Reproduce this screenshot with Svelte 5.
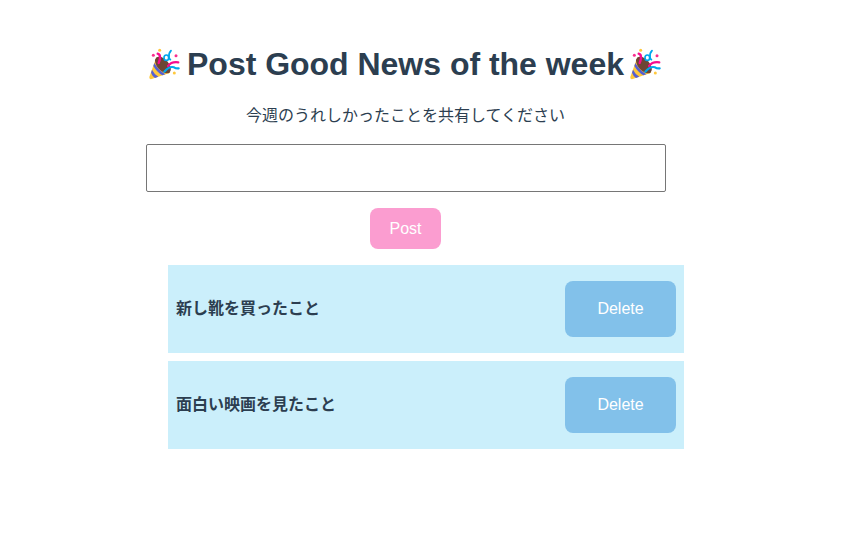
<script>
  let draft = $state('');
  let posts = $state(['新し靴を買ったこと', '面白い映画を見たこと']);

  function add() {
    if (!draft.trim()) return;
    posts.push(draft);
    draft = '';
  }

  function remove(index) {
    posts.splice(index, 1);
  }
</script>

{#snippet popper()}
  <svg class="popper" viewBox="0 0 102 102" aria-hidden="true">
    <path d="M25 28 L4 87 Q3 95 11 93 L67 74 Z" fill="#ffc83d" />
    <path d="M19 45 L16 54 Q27 73 43 82 L52 79 Q31 66 19 45Z" fill="#5560d4" />
    <path d="M12 65 L9 74 Q13 85 21 90 L31 86 Q18 78 12 65Z" fill="#5560d4" />
    <ellipse cx="45" cy="51" rx="17" ry="30" transform="rotate(-42 45 51)" fill="#6d4534" />
    <path d="M29 17 Q37 19 36 30 Q35 38 32 45" fill="none" stroke="#f70a8d" stroke-width="7" stroke-linecap="round" />
    <path d="M60 54 Q70 40 91 43" fill="none" stroke="#f70a8d" stroke-width="6.5" stroke-linecap="round" />
    <path d="M49 71 Q65 53 78 58 Q84 62 92 61" fill="none" stroke="#00a6ed" stroke-width="6.5" stroke-linecap="round" />
    <ellipse cx="55" cy="29" rx="7" ry="8" fill="#fff" stroke="#00a6ed" stroke-width="5" />
    <path d="M69 8 Q62 15 63 27 Q63 33 67 35" fill="none" stroke="#00a6ed" stroke-width="5.5" stroke-linecap="round" />
    <circle cx="16" cy="22" r="4.5" fill="#f92f8d" />
    <circle cx="84" cy="23" r="4.5" fill="#f92f8d" />
    <circle cx="35" cy="7" r="4.5" fill="#ffc83d" />
    <circle cx="79" cy="75" r="4.5" fill="#ffc83d" />
  </svg>
{/snippet}

<main>
  <h1>{@render popper()}<span>Post Good News of the week</span>{@render popper()}</h1>
  <p>今週のうれしかったことを共有してください</p>
  <input type="text" aria-label="Good news" bind:value={draft} />
  <button class="post" onclick={add}>Post</button>
  <ul>
    {#each posts as post, index}
      <li>
        <strong>{post}</strong>
        <button class="delete" onclick={() => remove(index)}>Delete</button>
      </li>
    {/each}
  </ul>
</main>

<style>
  :global(body) {
    background: #fff;
  }

  main {
    display: flex;
    flex-direction: column;
    align-items: center;
    box-sizing: border-box;
    width: 812px;
    padding-top: 45px;
    color: #2c3e50;
    font-family: 'Liberation Sans', 'Noto Sans CJK JP', sans-serif;
    font-size: 16px;
  }

  h1 {
    display: flex;
    align-items: center;
    justify-content: center;
    gap: 5.5px;
    margin: 0 1px 0 0;
    height: 38px;
    font-size: 32px;
    line-height: 38px;
    letter-spacing: -0.02px;
    white-space: nowrap;
  }

  .popper {
    width: 34px;
    height: 34px;
    flex: none;
    margin-top: 2px;
  }

  p {
    margin: 21px 1px 16px 0;
    height: 24px;
    line-height: 24px;
    font-weight: 400;
  }

  input {
    box-sizing: border-box;
    width: 520px;
    height: 48px;
    padding: 8px;
    border: 1px solid #767676;
    border-radius: 2px;
    background: #fff;
    color: inherit;
    font: inherit;
    outline: none;
  }

  button {
    padding: 0;
    border: 0;
    border-radius: 8px;
    color: #fff;
    font: 16px 'Liberation Sans', sans-serif;
    cursor: pointer;
  }

  .post {
    width: 71px;
    height: 41px;
    margin: 16px 1px 0 0;
    background: #fb9dd0;
  }

  ul {
    display: flex;
    flex-direction: column;
    gap: 8px;
    width: 516px;
    margin: 16px 0 0 40px;
    padding: 0;
    list-style: none;
  }

  li {
    display: flex;
    align-items: center;
    justify-content: space-between;
    box-sizing: border-box;
    height: 88px;
    padding: 0 8px;
    background: #cbeffb;
  }

  strong {
    padding-bottom: 4px;
  }

  .delete {
    width: 111px;
    height: 56px;
    background: #82c1ea;
  }
</style>
